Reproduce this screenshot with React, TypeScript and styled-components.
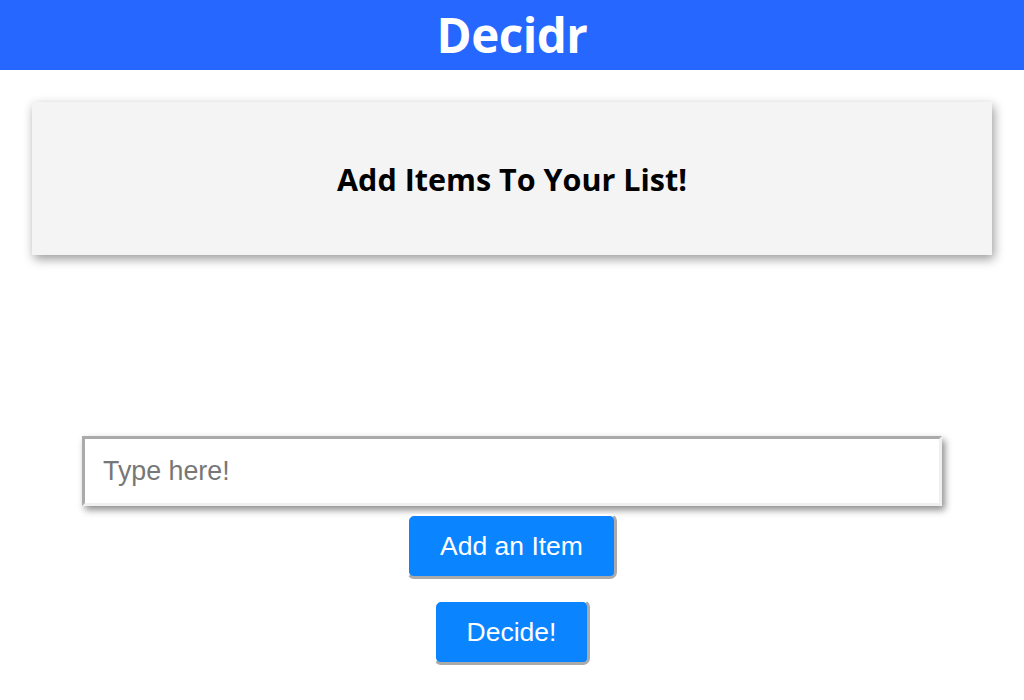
import styled, { createGlobalStyle } from "styled-components";

const GlobalStyle = createGlobalStyle`
  html, body {
    margin: 0;
    padding: 0;
    background: #fff;
  }
  body {
    font-family: "Liberation Sans", Arial, sans-serif;
  }
`;

const Header = styled.header`
  height: 70px;
  background: #2567ff;
  display: flex;
  align-items: center;
  justify-content: center;
`;

const Logo = styled.h1`
  margin: 0;
  color: #fff;
  font-family: "Open Sans", sans-serif;
  font-weight: 700;
  font-size: 47.5px;
  letter-spacing: -0.5px;
  line-height: 1;
`;

const Main = styled.main`
  display: flex;
  flex-direction: column;
  align-items: center;
  padding: 32px 32px 0;
`;

const Card = styled.section`
  align-self: stretch;
  height: 153px;
  background: #f4f4f4;
  box-shadow: 2px 4px 10px rgba(0, 0, 0, 0.4);
  display: flex;
  align-items: center;
  justify-content: center;
`;

const CardTitle = styled.h2`
  margin: 0;
  font-family: "Open Sans", sans-serif;
  font-weight: 700;
  font-size: 30.5px;
  letter-spacing: 0;
  color: #000;
`;

const ItemList = styled.ul`
  margin: 0;
  padding: 0;
  list-style: none;
  height: 181px;
`;

const Form = styled.form`
  display: flex;
  flex-direction: column;
  align-items: center;
  width: 860px;
`;

const Input = styled.input`
  box-sizing: border-box;
  width: 860px;
  height: 70px;
  border-style: solid;
  border-width: 3px;
  border-color: #aaa #f0f0f0 #f0f0f0 #aaa;
  box-shadow: 3px 4px 7px rgba(0, 0, 0, 0.45);
  padding: 0 18px;
  font-family: "Liberation Sans", Arial, sans-serif;
  font-size: 26.8px;
  outline: none;
  &::placeholder {
    color: #777;
  }
`;

const Button = styled.button<{ $top: number }>`
  margin-top: ${(p) => p.$top}px;
  background: #0a84ff;
  color: #fff;
  font-family: "Liberation Sans", Arial, sans-serif;
  font-size: 26.5px;
  padding: 0 31px;
  height: 65px;
  border: 2px solid #fff;
  border-right: 3px solid #aaa;
  border-bottom: 3px solid #aaa;
  border-radius: 7px;
  cursor: pointer;
`;

export default function App() {
  return (
    <>
      <GlobalStyle />
      <Header>
        <Logo>Decidr</Logo>
      </Header>
      <Main>
        <Card>
          <CardTitle>Add Items To Your List!</CardTitle>
        </Card>
        <ItemList />
        <Form onSubmit={(e) => e.preventDefault()}>
          <Input placeholder="Type here!" />
          <Button type="submit" $top={8}>
            Add an Item
          </Button>
          <Button type="button" $top={21}>
            Decide!
          </Button>
        </Form>
      </Main>
    </>
  );
}
